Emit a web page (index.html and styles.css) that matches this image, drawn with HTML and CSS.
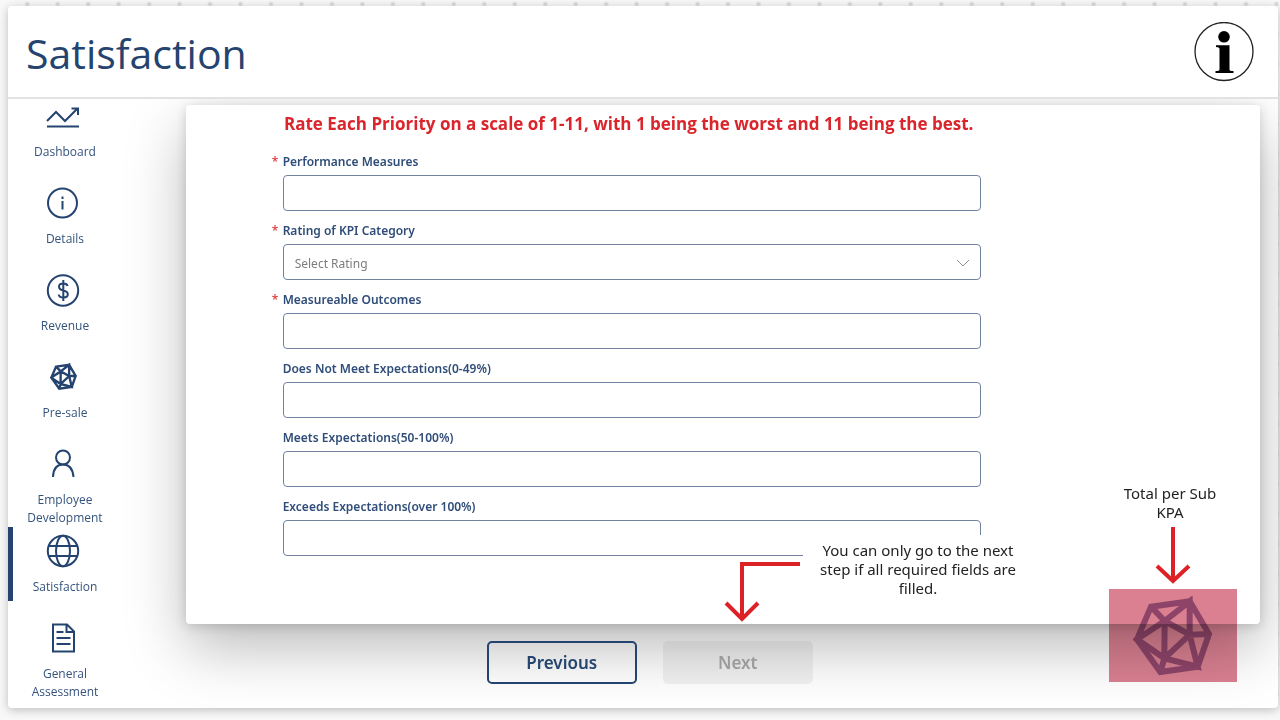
FILE: index.html
```html
<!DOCTYPE html>
<html lang="en">
<head>
<meta charset="utf-8">
<meta name="viewport" content="width=device-width, initial-scale=1">
<title>Satisfaction</title>
<link rel="stylesheet" href="styles.css">
</head>
<body>
<svg class="defs" aria-hidden="true">
  <symbol id="poly" viewBox="0 0 240 240">
    <path d="M54 32 170 16 228 114 194 212 82 228 12 130ZM54 32 95 75 170 16 170 116 228 114M170 116 194 212 94 187 82 228M94 187 12 130 95 75 170 116 94 187 95 75"/>
  </symbol>
</svg>
<div class="card">
  <header class="header">
    <h1 class="title">Satisfaction</h1>
    <button class="info" type="button" aria-label="Information">
      <svg viewBox="0 0 60 60"><circle cx="30" cy="29.500" r="29" fill="#fff" stroke="#222" stroke-width="1.3"/><circle cx="30" cy="14.8" r="5.8"/><path d="M22 23.3H35.5V47.5Q35.5 49 39.5 49V51H21.500V49Q25.500 49 25.500 47.500V27Q25.500 25.200 22 25Z"/></svg>
    </button>
  </header>
  <div class="body">
    <nav class="sidebar" aria-label="Sections">
      <a class="item" href="#"><svg class="icon" viewBox="4 1 32 32"><path d="M2 21 11 12 20 21 32 9M26.500 8.500H33V15" /><path d="M2 26.500H34"/></svg><span class="label">Dashboard</span></a>
      <a class="item" href="#"><svg class="icon" viewBox="4 1 32 32"><circle cx="17.500" cy="16" r="14.500"/><path d="M17.500 14V22.500M17.500 9.500V12"/></svg><span class="label">Details</span></a>
      <a class="item" href="#"><svg class="icon" viewBox="4 1 32 32"><circle cx="18" cy="16.500" r="15.200"/><path d="M22.500 12Q22 9.500 18.200 9.500 14 9.500 14 12.800 14 15.500 18.200 16.400 22.800 17.200 22.800 20.300 22.800 23.500 18.500 23.500 14 23.500 13.800 20.500M18.300 6V27"/></svg><span class="label">Revenue</span></a>
      <a class="item" href="#"><svg class="icon poly-small" viewBox="4 1 32 32"><use href="#poly" x="5" y="2" width="27" height="27"/></svg><span class="label">Pre-sale</span></a>
      <a class="item" href="#"><svg class="icon" viewBox="4 1 32 32"><circle cx="18" cy="9.500" r="7"/><path d="M8 29Q8.500 16.500 18 16.500T28.500 29"/></svg><span class="label">Employee Development</span></a>
      <a class="item active" href="#" aria-current="page"><svg class="icon" viewBox="4 1 32 32"><circle cx="18" cy="16" r="15.200"/><ellipse cx="18" cy="16" rx="7" ry="15.200"/><path d="M3.500 11H32.500M3.500 21H32.500"/></svg><span class="label">Satisfaction</span></a>
      <a class="item" href="#"><svg class="icon" viewBox="4 1 32 32"><path d="M8 2.500H22L29 9.500V29.500H8ZM21.500 3V10H28.500M11.500 10H18.500M11.500 16H25.500M11.500 22H25.500"/></svg><span class="label">General Assessment</span></a>
    </nav>
    <main class="main">
      <section class="panel">
        <form class="form" id="rating">
          <p class="notice">Rate Each Priority on a scale of 1-11, with 1 being the worst and 11 being the best.</p>
          <div class="field required"><label for="f1">Performance Measures</label><input id="f1" type="text" required></div>
          <div class="field required"><label for="f2">Rating of KPI Category</label>
            <div class="select-wrap"><select id="f2" required><option value="">Select Rating</option></select><svg class="chevron" viewBox="0 0 14 8"><path d="M1 1 7 7 13 1"/></svg></div></div>
          <div class="field required"><label for="f3">Measureable Outcomes</label><input id="f3" type="text" required></div>
          <div class="field"><label for="f4">Does Not Meet Expectations(0-49%)</label><input id="f4" type="text"></div>
          <div class="field"><label for="f5">Meets Expectations(50-100%)</label><input id="f5" type="text"></div>
          <div class="field"><label for="f6">Exceeds Expectations(over 100%)</label><input id="f6" type="text"></div>
        </form>
        <div class="callout callout-next">
          <svg class="arrow-next" viewBox="0 0 80 64"><path d="M77 5H19V60M3 44 19 60 35 44"/></svg>
          <p class="note">You can only go to the next<br>step if all required fields are<br>filled.</p>
        </div>
        <div class="callout callout-total">
          <p class="note">Total per Sub<br>KPA</p>
          <svg class="arrow-total" viewBox="0 0 38 60"><path d="M19 2V56M3 41 19 56 35 41"/></svg>
          <div class="total"><svg class="poly-large"><use href="#poly"/></svg></div>
        </div>
      </section>
      <div class="actions">
        <button class="btn" type="button">Previous</button>
        <button class="btn btn-next" type="submit" form="rating" disabled>Next</button>
      </div>
    </main>
  </div>
</div>
</body>
</html>
```
FILE: styles.css
```css
* { box-sizing: border-box; }

body {
  margin: 0;
  min-height: 100vh;
  padding: 6px 2px 12px 8px;
  display: flex;
  overflow-x: hidden;
  font-family: "Noto Sans", "Open Sans", sans-serif;
  color: #24446f;
  background: #f8f8f8 radial-gradient(circle, #d9d9d9 0, #d9d9d9 1px, transparent 3px) 12px -11px / calc(100% / 42) 30px;
}

.defs { position: absolute; width: 0; height: 0; }

.card {
  flex: 1;
  display: flex;
  flex-direction: column;
  background: #fff;
  border-radius: 4px;
  box-shadow: 0 2px 10px rgba(0, 0, 0, 0.24);
}

.header {
  position: relative;
  z-index: 2;
  display: flex;
  align-items: center;
  justify-content: space-between;
  height: 93px;
  padding: 0 24px 0 18px;
  background: #fff;
  border-bottom: 2px solid #e2e2e2;
  border-radius: 4px 4px 0 0;
}

.title {
  margin: 0;
  padding-top: 2px;
  font-family: "Open Sans", sans-serif;
  font-size: 41px;
  font-weight: 400;
  line-height: 60px;
}

.info {
  width: 60px;
  height: 60px;
  padding: 0;
  border: 0;
  background: none;
}

.info svg { display: block; }

.body { flex: 1; display: flex; }

.sidebar {
  width: 114px;
  margin-top: -7px;
  display: grid;
  grid-auto-rows: 87px;
  align-items: start;
}

.item {
  display: flex;
  flex-direction: column;
  align-items: center;
  min-height: 74px;
  padding: 9px 12px 0;
  color: #35537d;
  text-decoration: none;
  text-align: center;
  font: 12px/18px "Open Sans", sans-serif;
}

.active {
  padding-left: 7px;
  border-left: 5px solid #24446f;
}

.icon {
  width: 32px;
  height: 32px;
  margin-bottom: 10px;
  fill: none;
  stroke: #24446f;
  stroke-width: 2;
  overflow: visible;
}

.poly-small { stroke-width: 21; }

.main {
  flex: 1;
  margin-left: 64px;
  padding: 6px 18px 0 0;
}

.panel {
  position: relative;
  min-height: 519px;
  padding: 7px 0 55px;
  background: #fff;
  border-radius: 4px;
  box-shadow: 0 24px 60px rgba(0, 0, 0, 0.27), 0 2px 12px rgba(0, 0, 0, 0.16);
}

.form {
  width: 65%;
  margin-left: 9%;
}

.notice {
  margin: 0 0 18px;
  padding-right: 6px;
  color: #d9252b;
  font-family: "Open Sans", sans-serif;
  font-size: 17px;
  font-weight: 700;
  line-height: 24px;
  text-align: center;
  white-space: nowrap;
}

.field { margin-bottom: 12px; }

.field label {
  position: relative;
  display: block;
  margin-bottom: 5px;
  color: #2f4d78;
  font-size: 12px;
  font-weight: 600;
  line-height: 16px;
}

.required label::before {
  content: "*";
  position: absolute;
  left: -11px;
  color: #e04848;
}

.field input,
.field select {
  display: block;
  width: 100%;
  height: 36px;
  padding: 2px 11px 0;
  border: 1px solid #71839f;
  border-radius: 4px;
  background: #fff;
  color: #7d7d7d;
  font: 12px "Noto Sans", sans-serif;
  appearance: none;
}

.select-wrap { position: relative; }

.chevron {
  position: absolute;
  right: 11px;
  top: 15px;
  width: 14px;
  height: 8px;
  fill: none;
  stroke: #929292;
}

.callout { position: absolute; }

.note {
  margin: 0;
  color: #222;
  font-size: 15px;
  line-height: 19px;
  text-align: center;
}

.callout-next {
  left: 50%;
  top: 430px;
  display: flex;
  align-items: flex-start;
}

.callout-next .note {
  min-width: 230px;
  padding: 6px 0;
  background: #fff;
}

.callout svg {
  fill: none;
  stroke: #dc2226;
  stroke-width: 4;
}

.arrow-next {
  width: 80px;
  height: 64px;
  margin-top: 24px;
}

.callout-total {
  right: 23px;
  top: 379px;
  display: flex;
  flex-direction: column;
  align-items: center;
  mix-blend-mode: multiply;
}

.callout-total .note { padding-right: 6px; }

.arrow-total {
  width: 38px;
  height: 60px;
  margin-top: 3px;
  margin-bottom: 4px;
}

.total {
  display: flex;
  align-items: center;
  justify-content: center;
  width: 128px;
  height: 93px;
  background: #da8091;
}

.callout .poly-large {
  width: 80px;
  height: 80px;
  stroke: #8e4469;
  stroke-width: 18;
}

.actions {
  position: relative;
  display: flex;
  gap: 26px;
  margin: 17px 0 23px 28%;
}

.btn {
  width: 150px;
  height: 43px;
  border: 2px solid #24446f;
  border-radius: 5px;
  background: none;
  color: #24446f;
  font: 600 17px "Noto Sans", sans-serif;
}

.btn-next {
  border-color: transparent;
  background: rgba(0, 0, 0, 0.05);
  color: #9b9b9b;
}
```
